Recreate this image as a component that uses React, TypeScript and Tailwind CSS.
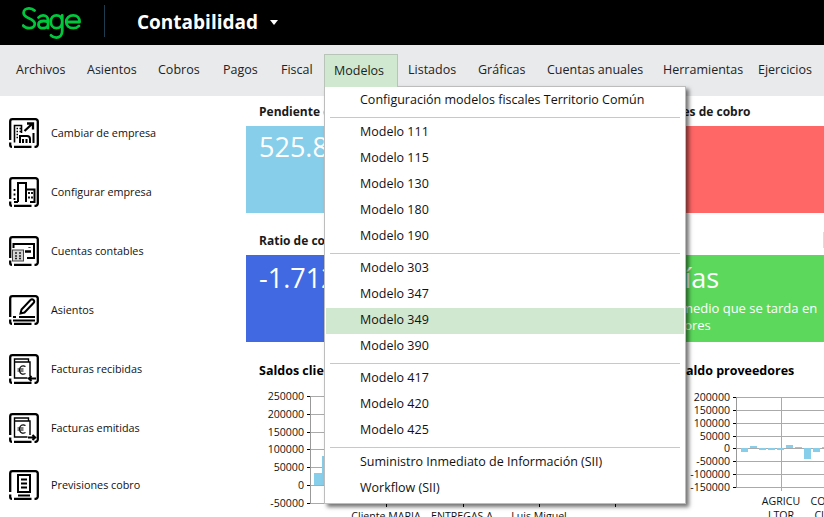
import type { ReactNode } from 'react'

const navLeft = [
  { label: 'Archivos', width: 'w-[71px]' },
  { label: 'Asientos', width: 'w-[71px]' },
  { label: 'Cobros', width: 'w-[65px]' },
  { label: 'Pagos', width: 'w-[58px]' },
  { label: 'Fiscal', width: 'w-[43px]' },
]

const navRight = [
  { label: 'Listados', width: 'w-[70px]' },
  { label: 'Gráficas', width: 'w-[69px]' },
  { label: 'Cuentas anuales', width: 'w-[116px]' },
  { label: 'Herramientas', width: 'w-[95px]' },
  { label: 'Ejercicios', width: 'w-[60px]' },
]

const menuGroups = [
  ['Configuración modelos fiscales Territorio Común'],
  ['Modelo 111', 'Modelo 115', 'Modelo 130', 'Modelo 180', 'Modelo 190'],
  ['Modelo 303', 'Modelo 347', 'Modelo 349', 'Modelo 390'],
  ['Modelo 417', 'Modelo 420', 'Modelo 425'],
  ['Suministro Inmediato de Información (SII)', 'Workflow (SII)'],
]

function SageLogo() {
  return (
    <svg width="60" height="32" viewBox="0 0 60 32" fill="none" stroke="#00c83c" strokeWidth="2.8" strokeLinecap="round" strokeLinejoin="round">
      <path d="M12.500 3.500C11 2 9 1.400 7 1.400 4 1.400 1.600 3.200 1.600 6c0 2.800 2.400 4 5.200 5.200 3 1.300 6 2.600 6 5.600 0 2.800-2.600 4.400-5.600 4.400-2.400 0-4.600-.9-6-2.600" />
      <path d="M16.500 10.500c1.200-1.500 2.800-2.200 4.600-2.200 3 0 4.900 2 4.900 4.800V21M26 15c-1-.6-2.600-1-4.200-1-3 0-5.300 1.300-5.300 3.700 0 2.200 2 3.500 4.400 3.500 2.200 0 4-.9 5.100-2.500" />
      <path d="M34.500 8.300c3.200 0 5.700 2.500 5.700 6.400s-2.500 6.500-5.700 6.500-5.700-2.600-5.700-6.500 2.500-6.400 5.700-6.400zM40.200 8.500V24c0 4.200-2.500 6.600-5.900 6.600-2.200 0-4-.8-5.300-2.300" />
      <path d="M44.200 15h13.400c.2-4-2.500-6.700-6.400-6.700-4 0-7 2.800-7 6.500 0 3.800 3 6.400 7.100 6.400 2.300 0 4.300-.8 5.700-2.300" />
    </svg>
  )
}

function IconFrame({ children }: { children: ReactNode }) {
  return (
    <svg width="30" height="30" viewBox="0 0 30 30" fill="none" stroke="#000" strokeWidth="2" className="shrink-0">
      <path d="M3.500 1.200h23a2.300 2.300 0 0 1 2.300 2.300v23a2.300 2.300 0 0 1-2.300 2.300h-1M22.500 28.800H5M3 28.800a1.800 1.800 0 0 1-1.800-1.800V24.500M1.200 22V3.500a2.300 2.300 0 0 1 2.300-2.300" strokeWidth="2.300" />
      {children}
    </svg>
  )
}

function CambiarIcon() {
  return (
    <IconFrame>
      <path d="M5.500 24.500V7.500h7V15" strokeWidth="1.600" />
      <path d="M7.500 10.500h1.500M10.500 10.500h1.500M7.500 13.500h1.500M10.500 13.500h1.500M7.500 16.500h1.500M7.500 19.500h1.500" strokeWidth="1.700" />
      <path d="M11 25v-7h7c2 0 3 1 3 3v4M14 25v-4M17.500 25v-4M24.500 25V15" strokeWidth="2" />
      <path d="M15.500 13l7.500-7M18 5.500h6v6" strokeWidth="2.300" />
    </IconFrame>
  )
}

function ConfigurarIcon() {
  return (
    <IconFrame>
      <path d="M9 25V6h8v19M9 25H5M17 12.500h8.500V25H21" strokeWidth="2" />
      <path d="M5.500 12v2M5.500 16.500v2M5.500 21v2M20 15v2M23 15v2M20 19.500v2M23 19.500v2" strokeWidth="1.800" />
    </IconFrame>
  )
}

function CuentasIcon() {
  return (
    <IconFrame>
      <path d="M4.500 12V8H25V22H18" strokeWidth="2" />
      <path d="M16 15.500h6M20.500 11v.8" strokeWidth="2.300" />
      <rect x="3.500" y="14" width="11" height="11" fill="#d4d4d4" stroke="#444" strokeWidth="1" />
      <path d="M6 17h2M10 17h2M6 20h2M10 20h2M6 22.500h2M10 22.500h2" stroke="#222" strokeWidth="1.300" />
    </IconFrame>
  )
}

function AsientosIcon() {
  return (
    <IconFrame>
      <path d="M11.500 18.500l1-4 9-9.500c1-1 2-1 3 0s1 2 0 3l-9 9.500-4 1z" strokeWidth="2" />
      <path d="M4 22h3M10 22h16M4 25.500h22" strokeWidth="2" />
    </IconFrame>
  )
}

function FacturaIcon({ out }: { out?: boolean }) {
  return (
    <IconFrame>
      <path d="M5.500 8V5h14v3M5.500 8v16h13M5.500 8H21v14" strokeWidth="1.400" />
      <path d="M16.500 12.500c-3-1.500-6-.2-6 3.500s3 5 6 3.500M8.500 15h6M8.500 17h6" strokeWidth="1.100" />
      {out ? (
        <path d="M19 24.500h7M23.500 22l2.700 2.500-2.700 2.500" strokeWidth="2" />
      ) : (
        <path d="M27 24.500h-7M22.500 22l-2.700 2.500 2.700 2.500" strokeWidth="2" />
      )}
    </IconFrame>
  )
}

function PrevisionesIcon() {
  return (
    <IconFrame>
      <path d="M9 5h12v17H9zM9 25.500h12" strokeWidth="2" />
      <path d="M12 9.500h6M12 13.500h6M12 17.500h6" strokeWidth="2" />
    </IconFrame>
  )
}

const sideItems = [
  { label: 'Cambiar de empresa', icon: <CambiarIcon /> },
  { label: 'Configurar empresa', icon: <ConfigurarIcon /> },
  { label: 'Cuentas contables', icon: <CuentasIcon /> },
  { label: 'Asientos', icon: <AsientosIcon /> },
  { label: 'Facturas recibidas', icon: <FacturaIcon /> },
  { label: 'Facturas emitidas', icon: <FacturaIcon out /> },
  { label: 'Previsiones cobro', icon: <PrevisionesIcon /> },
]

function ModelosMenu() {
  return (
    <div className="absolute left-0 top-[32px] z-10 w-[362px] h-[418px] border border-[#bdbdbd] bg-white p-px shadow-[3px_3px_4px_rgba(0,0,0,0.55)]">
      {menuGroups.map((group, i) => (
        <div key={group[0]}>
          {i > 0 && <div className="mx-1 mt-[3px] mb-[2px] h-px bg-[#c8c8c8]" />}
          {group.map(item => (
            <div
              key={item}
              className={`h-[26px] pl-[34px] pb-[2px] flex items-center text-[12.5px] text-[#111] whitespace-nowrap ${item === 'Modelo 349' ? 'bg-[#cfe8cf]' : ''}`}
            >
              {item}
            </div>
          ))}
        </div>
      ))}
    </div>
  )
}

function Kpi({ title, bg, value, valueClass, lines, mark }: {
  title: string
  bg: string
  value: string
  valueClass?: string
  lines?: ReactNode
  mark?: boolean
}) {
  return (
    <div>
      <div className="relative h-[30px] flex items-center pt-[2px] pl-[13px] text-[12px] font-bold text-[#1a1a1a] whitespace-nowrap">
        {title}
        {mark && <span className="absolute right-0 top-[7px] w-px h-[16px] bg-[#dcdcdc]" />}
      </div>
      <div className={`h-[87px] overflow-hidden text-white whitespace-nowrap ${bg}`}>
        <div className={`text-[27px] leading-[36px] ${valueClass ?? 'pt-[3px] pl-[13px]'}`}>{value}</div>
        {lines}
      </div>
    </div>
  )
}

function ClientesChart() {
  const ys = [396, 414, 432, 449, 467, 485, 503]
  const labels = ['250000', '200000', '150000', '100000', '50000', '0', '-50000']
  return (
    <svg width="420" height="171" viewBox="246 346 420 171" fontFamily="'Open Sans', sans-serif" fontSize="10.6" className="block">
      {ys.map((y, i) => (
        <g key={y}>
          <line x1="307" x2="664" y1={y + 0.5} y2={y + 0.5} stroke="#aaa" />
          <line x1="307" x2="311" y1={y + 0.5} y2={y + 0.5} stroke="#000" />
          <text x="304" y={y + 3.5} textAnchor="end" fill="#111">{labels[i]}</text>
        </g>
      ))}
      <line x1="310.5" x2="310.5" y1="396" y2="504" stroke="#999" />
      <rect x="314" y="473" width="8" height="12" fill="#87ceeb" />
      <rect x="322" y="456" width="8" height="29" fill="#87ceeb" />
      {[386, 463, 539, 615].map(x => (
        <line key={x} x1={x + 0.5} x2={x + 0.5} y1="503" y2="507" stroke="#000" />
      ))}
      <text x="386" y="520" textAnchor="middle" fill="#111">Cliente MARIA</text>
      <text x="462" y="520" textAnchor="middle" fill="#111">ENTREGAS A</text>
      <text x="539" y="520" textAnchor="middle" fill="#111">Luis Miguel</text>
    </svg>
  )
}

function ProveedoresChart() {
  const labels = ['200000', '150000', '100000', '50000', '0', '-50000', '-100000', '-150000']
  const bars = [
    [741, 448, 7, 4], [750, 446, 7, 2], [759, 448, 7, 2], [768, 448, 7, 2], [777, 448, 7, 2],
    [786, 445, 7, 3], [795, 447, 7, 1], [804, 448, 7, 11], [813, 448, 7, 4], [822, 447, 7, 1],
  ]
  return (
    <svg width="154" height="171" viewBox="670 346 154 171" fontFamily="'Open Sans', sans-serif" fontSize="10.6" className="block">
      {labels.map((label, i) => {
        const y = Math.round(397 + i * 12.85)
        return (
          <g key={label}>
            <line x1="733" x2="824" y1={y + 0.5} y2={y + 0.5} stroke="#aaa" />
            <line x1="733" x2="737" y1={y + 0.5} y2={y + 0.5} stroke="#000" />
            <text x="730" y={y + 3.5} textAnchor="end" fill="#111">{label}</text>
          </g>
        )
      })}
      <line x1="736.5" x2="736.5" y1="397" y2="488" stroke="#999" />
      <line x1="781.5" x2="781.5" y1="397" y2="491" stroke="#aaa" />
      {bars.map(([x, y, w, h]) => (
        <rect key={x} x={x} y={y} width={w} height={h} fill="#87ceeb" />
      ))}
      <text x="781" y="505" textAnchor="middle" fill="#111">AGRICU</text>
      <text x="781" y="519" textAnchor="middle" fill="#111">LTOR</text>
      <text x="822" y="505" textAnchor="middle" fill="#111">CON</text>
      <text x="822" y="519" textAnchor="middle" fill="#111">CLI</text>
    </svg>
  )
}

export default function App() {
  return (
    <div className="relative w-[824px] h-[517px] overflow-hidden bg-white font-['Open_Sans',sans-serif]">
      <header className="h-[45px] bg-black flex items-center pl-[22px]">
        <SageLogo />
        <div className="ml-[22px] mb-[3px] w-px h-[32px] bg-[#1d3d50]" />
        <span className="ml-[32px] text-[19px] font-bold text-white">Contabilidad</span>
        <span className="ml-[12px] w-0 h-0 border-x-[4px] border-x-transparent border-t-[5px] border-t-white" />
      </header>

      <nav className="h-[51px] bg-[#e9eaec] flex items-start pl-[16px] pt-[9px] text-[12.5px] text-[#222] whitespace-nowrap">
        {navLeft.map(item => (
          <div key={item.label} className={`h-[32px] flex items-center ${item.width}`}>{item.label}</div>
        ))}
        <div className="relative mr-[10px]">
          <div className="relative z-20 w-[74px] h-[33px] flex items-center pl-[9px] bg-[#cfe8cf] border border-b-0 border-[#b8c4b8]">Modelos</div>
          <ModelosMenu />
        </div>
        {navRight.map(item => (
          <div key={item.label} className={`h-[32px] flex items-center ${item.width}`}>{item.label}</div>
        ))}
      </nav>

      <div className="flex">
        <aside className="w-[246px] shrink-0 pt-[22px] pl-[9px]">
          {sideItems.map(item => (
            <div key={item.label} className="h-[59px] last:-mt-[2px] flex items-start gap-[12px] text-[10.8px] text-[#111]">
              {item.icon}
              <span className="leading-[30px]">{item.label}</span>
            </div>
          ))}
        </aside>

        <main className="flex-1 min-w-0">
          <div className="grid grid-cols-[200px_1fr_210px] gap-x-[4px]">
            <Kpi title="Pendiente de cobro" bg="bg-[#87ceeb]" value="525.800" />
            <Kpi title="Pendiente de pago" bg="bg-[#87ceeb]" value="0" />
            <Kpi title="Previsiones de cobro" bg="bg-[#ff6666]" value="" />
          </div>
          <div className="grid grid-cols-[200px_1fr_210px] gap-x-[4px] mt-[12px]">
            <Kpi title="Ratio de cobro" bg="bg-[#4169e1]" value="-1.712" valueClass="pt-[5px] pl-[13px]" />
            <Kpi title="Ratio de pago" bg="bg-[#4169e1]" value="0" valueClass="pt-[5px] pl-[13px]" />
            <Kpi
              title="Plazo"
              bg="bg-[#5cd95c]"
              value="30 días"
              valueClass="pt-[5px] pl-[16px]"
              mark
              lines={
                <div className="text-[13px] leading-[17px] pt-[4px]">
                  <div className="pl-[18px]">Tiempo medio que se tarda en</div>
                  <div className="pl-[20px]">proveedores</div>
                </div>
              }
            />
          </div>
          <div className="relative h-[176px] flex">
            <div className="pt-[4px]"><ClientesChart /></div>
            <div className="pt-[4px] ml-[4px]"><ProveedoresChart /></div>
            <span className="absolute left-[13px] top-[20px] text-[12.5px] font-bold text-black">Saldos clientes</span>
            <span className="absolute left-[433px] top-[20px] text-[12.5px] font-bold text-black">Saldo proveedores</span>
          </div>
        </main>
      </div>
    </div>
  )
}
